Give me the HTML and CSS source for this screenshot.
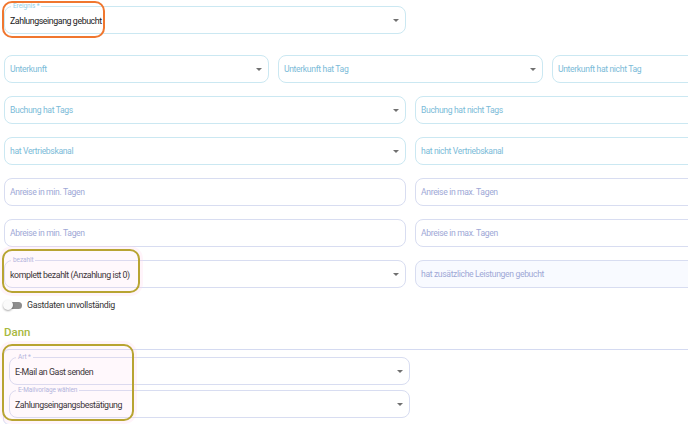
FILE: index.html
```html
<!DOCTYPE html>
<html lang="de">
<head>
  <meta charset="UTF-8" />
  <meta name="viewport" content="width=device-width, initial-scale=1.0"/>
  <title>Regel bearbeiten</title>
  <link rel="stylesheet" href="styles.css">
</head>
<body>

  <div class="page">

    <div class="row first">
      <div class="field half">
        <span class="label">Ereignis *</span>
        <span class="value">Zahlungseingang gebucht</span>
        <span class="arrow"></span>
      </div>
    </div>

    <div class="row cols-3">
      <div class="field"><span class="placeholder">Unterkunft</span><span class="arrow"></span></div>
      <div class="field"><span class="placeholder">Unterkunft hat Tag</span><span class="arrow"></span></div>
      <div class="field"><span class="placeholder">Unterkunft hat nicht Tag</span></div>
    </div>

    <div class="row cols-2">
      <div class="field"><span class="placeholder">Buchung hat Tags</span><span class="arrow"></span></div>
      <div class="field"><span class="placeholder">Buchung hat nicht Tags</span></div>
    </div>

    <div class="row cols-2">
      <div class="field"><span class="placeholder">hat Vertriebskanal</span><span class="arrow"></span></div>
      <div class="field"><span class="placeholder">hat nicht Vertriebskanal</span></div>
    </div>

    <div class="row cols-2 lilac">
      <div class="field"><span class="placeholder">Anreise in min. Tagen</span></div>
      <div class="field"><span class="placeholder">Anreise in max. Tagen</span></div>
    </div>

    <div class="row cols-2 lilac">
      <div class="field"><span class="placeholder">Abreise in min. Tagen</span></div>
      <div class="field"><span class="placeholder">Abreise in max. Tagen</span></div>
    </div>

    <div class="row cols-2 lilac">
      <div class="field">
        <span class="label">bezahlt</span>
        <span class="value">komplett bezahlt (Anzahlung ist 0)</span>
        <span class="arrow"></span>
      </div>
      <div class="field tinted"><span class="placeholder">hat zusätzliche Leistungen gebucht</span></div>
    </div>

    <label class="switch-row">
      <span class="switch"><span class="knob"></span></span>
      Gastdaten unvollständig
    </label>

    <h2 class="section-title">Dann</h2>

    <div class="card">
      <div class="field">
        <span class="label">Art *</span>
        <span class="value">E-Mail an Gast senden</span>
        <span class="arrow"></span>
      </div>
      <div class="field">
        <span class="label">E-Mailvorlage wählen</span>
        <span class="value">Zahlungseingangsbestätigung</span>
        <span class="arrow"></span>
      </div>
    </div>

    <!-- annotation marks drawn over the form -->
    <div class="mark mark-orange"></div>
    <div class="mark mark-olive mark-paid"></div>
    <div class="mark mark-olive mark-then"></div>

  </div>

</body>
</html>
```

FILE: styles.css
```css
* {
  margin: 0;
  padding: 0;
  box-sizing: border-box;
}

html, body {
  width: 688px;
  height: 424px;
  overflow: hidden;
  background: #fff;
}

body {
  font-family: Roboto, "Liberation Sans", sans-serif;
  color: #222;
}

.page {
  position: relative;
  width: 820px;
  padding: 6px 0 0 4px;
}

.row {
  display: flex;
  gap: 9px;
  width: 813px;
  margin-bottom: 13px;
}

.row.first {
  margin-bottom: 21px;
}

.cols-3 .field {
  flex: 1;
}

.cols-2 .field {
  flex: 1;
}

.field.half {
  width: 402px;
}

.field {
  position: relative;
  height: 28px;
  border: 1px solid #cbe8f2;
  border-radius: 8px;
  background: #fff;
  display: flex;
  align-items: center;
  padding: 0 5px;
}

.lilac .field {
  border-color: #d8ddf1;
}

.field.tinted {
  background: #f8faff;
}

.label {
  position: absolute;
  top: -4px;
  left: 6px;
  padding: 0 2px;
  background: #fff;
  font-size: 6.5px;
  line-height: 7px;
  letter-spacing: -0.1px;
  color: #94cfe4;
}

.lilac .label,
.card .label {
  color: #aab3dc;
}

.value {
  font-size: 8.8px;
  letter-spacing: -0.42px;
  color: #222;
  padding-top: 1px;
}

.placeholder {
  font-size: 8.6px;
  letter-spacing: -0.35px;
  color: #7bbbd8;
}

.lilac .placeholder {
  color: #9ea8d6;
}

.arrow {
  margin-left: auto;
  margin-right: 1px;
  width: 0;
  height: 0;
  border-left: 3px solid transparent;
  border-right: 3px solid transparent;
  border-top: 3px solid #707070;
}

.switch-row {
  display: flex;
  align-items: center;
  gap: 5px;
  height: 10px;
  margin-top: -1px;
  font-size: 8.8px;
  letter-spacing: -0.3px;
  color: #333;
}

.switch {
  position: relative;
  width: 18px;
  height: 7px;
  border-radius: 4px;
  background: #8d8d8d;
}

.knob {
  position: absolute;
  left: -1px;
  top: -2px;
  width: 10px;
  height: 10px;
  border-radius: 50%;
  background: #fafafa;
  box-shadow: 0 1px 2px rgba(0, 0, 0, 0.35);
}

.section-title {
  margin-top: 15px;
  font-size: 11.5px;
  line-height: 14px;
  font-weight: 500;
  color: #a8b83e;
}

.card {
  display: flex;
  flex-direction: column;
  gap: 5px;
  width: 815px;
  margin: 10px 0 0 -1px;
  padding: 7px 5px 6px;
  border: 1px solid #d4daf1;
  border-radius: 6px;
}

.card .field {
  width: 401px;
  border-color: #d8ddf1;
}

.mark {
  position: absolute;
  border: 2px solid;
  border-radius: 10px;
}

.mark-orange {
  left: 2px;
  top: 1px;
  width: 103px;
  height: 37px;
  border-color: #f0772f;
}

.mark-olive {
  border-color: #b8a432;
  background: rgba(255, 200, 230, 0.12);
  box-shadow: 0 0 0 3px rgba(255, 210, 235, 0.25);
}

.mark-paid {
  left: 2px;
  top: 249px;
  width: 138px;
  height: 44px;
}

.mark-then {
  left: 2px;
  top: 344px;
  width: 132px;
  height: 77px;
}
```
